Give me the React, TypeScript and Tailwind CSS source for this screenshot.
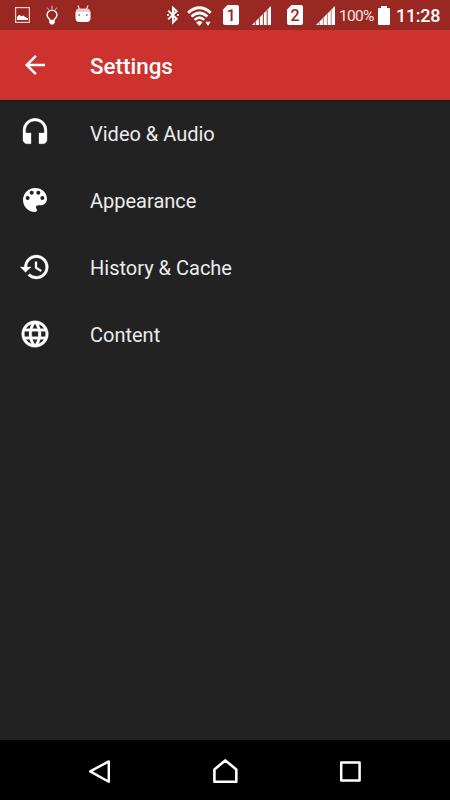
import type { ReactNode } from "react";
import type { IconType } from "react-icons";
import { MdArrowBack, MdHeadset, MdHistory, MdLanguage } from "react-icons/md";

interface SettingsItem {
  label: string;
  icon: IconType | typeof PaletteIcon;
}

const items: SettingsItem[] = [
  { label: "Video & Audio", icon: MdHeadset },
  { label: "Appearance", icon: PaletteIcon },
  { label: "History & Cache", icon: MdHistory },
  { label: "Content", icon: MdLanguage },
];

function PaletteIcon({ className }: { className?: string }) {
  return (
    <svg className={className} viewBox="0 0 24 24" fill="currentColor">
      <path d="M12 3a9 9 0 0 0 0 18c.83 0 1.5-.67 1.5-1.5 0-.39-.15-.74-.39-1.01-.23-.26-.38-.61-.38-.99 0-.83.67-1.5 1.5-1.5H16c2.76 0 5-2.24 5-5 0-4.42-4.03-8-9-8z" />
      <g className="fill-[#222222]">
        <circle cx="6.5" cy="10.5" r="1.5" />
        <circle cx="9.5" cy="6.5" r="1.5" />
        <circle cx="14.5" cy="6.5" r="1.5" />
        <circle cx="17.5" cy="10.5" r="1.5" />
      </g>
    </svg>
  );
}

function PictureIcon() {
  return (
    <svg className="ml-[15px] h-4 w-[15px] shrink-0" viewBox="0 0 15 16" fill="none">
      <rect x="0.6" y="0.6" width="13.8" height="14.8" stroke="#f0d2d0" strokeWidth="1.2" />
      <path d="M2 13V10l2.3-2.3 2 1.6 2.2-.8L10 10l3 1.2V13z" fill="#fff" />
    </svg>
  );
}

function BulbIcon() {
  return (
    <svg className="ml-4 h-5 w-3 shrink-0" viewBox="0 0 12 20" fill="none">
      <path d="M1.2 2.6l1.5 2M6 .8v3M10.8 2.6l-1.5 2" stroke="#f0d2d0" />
      <path d="M4.1 15.4C3.8 13.6 1.1 12.8 1.1 10a4.9 4.9 0 0 1 9.8 0c0 2.8-2.7 3.6-3 5.4z" stroke="#fff" strokeWidth="1.4" />
      <path d="M3.2 15h5.6v2.2L7.4 19.4H4.6l-1.4-2.2z" fill="#fff" />
    </svg>
  );
}

function CatIcon() {
  return (
    <svg className="mb-[3px] ml-[17px] h-[18px] w-4 shrink-0" viewBox="0 0 16 18">
      <path d="M3 .5l1.6 4M13 .5l-1.6 4" stroke="#f3dcda" strokeWidth="1.2" />
      <path d="M.6 7.2Q.8 3.4 4 3.4h8q3.2 0 3.4 3.8z" fill="#edcbc9" />
      <path d="M.5 7h15v6q0 4-4 4h-7q-4 0-4-4z" fill="#fff" />
      <circle cx="4.2" cy="10" r="1" fill="#bd6763" />
      <circle cx="11.8" cy="10" r="1" fill="#bd6763" />
    </svg>
  );
}

function BluetoothIcon() {
  return (
    <svg className="ml-auto h-5 w-3 shrink-0" viewBox="0 0 12 20" fill="none">
      <path d="M1.2 5.6l8.4 8.2L6 17.4V2.8l3.6 3.5-8.4 8.1" stroke="#fff" strokeWidth="2" />
      <path d="M0 9h2v2H0zM10 9h2v2h-2z" fill="#f3dcda" />
    </svg>
  );
}

function WifiIcon() {
  return (
    <svg className="ml-2 h-[21px] w-[25px] shrink-0" viewBox="0 0 25 21" fill="none">
      <path d="M1.1 7.8Q12.4 -2.2 23.7 7.8" stroke="#fff" strokeWidth="3" />
      <path d="M4.4 11.5Q12.4 4.5 20.4 11.5" stroke="#fff" strokeWidth="2.8" />
      <path d="M7.6 14.9Q12.4 10.4 17.2 14.9" stroke="#fff" strokeWidth="2.6" />
      <path d="M9.2 17.4Q12.4 14.6 15.4 17.4L12.4 21z" fill="#fff" />
      <path d="M18.4 16.7h5.2L21 21z" fill="#fff" />
    </svg>
  );
}

function SignalIcon({ gapColor }: { gapColor: string }) {
  return (
    <svg className="h-[19px] w-[19px] shrink-0" viewBox="0 0 19 19">
      <path d="M0 19L19 0v19z" fill="#fff" />
      <path d="M3 16l1-1v4H3zM6.8 12.2l1.2-1.2v8H6.8zM10.8 8.2L12 7v12h-1.2zM14.6 4.4l1.2-1.2V19h-1.2z" fill={gapColor} />
    </svg>
  );
}

function SimCard({ children }: { children: ReactNode }) {
  return (
    <span className="relative flex h-5 w-4 shrink-0 items-center justify-center">
      <svg className="absolute inset-0 h-5 w-4" viewBox="0 0 16 20">
        <path d="M4.5 0H14q2 0 2 2v16q0 2-2 2H2q-2 0-2-2V4.5z" fill="#fff" />
      </svg>
      <span className="relative pt-px text-[16px] leading-5 font-medium text-[#992722]">{children}</span>
    </span>
  );
}

function StatusBar() {
  return (
    <div className="flex h-[30px] items-center bg-[#992722] pr-[9px] text-white">
      <PictureIcon />
      <BulbIcon />
      <CatIcon />
      <BluetoothIcon />
      <WifiIcon />
      <span className="ml-[11px] flex">
        <SimCard>1</SimCard>
      </span>
      <span className="ml-[13px] flex">
        <SignalIcon gapColor="#aa4f4b" />
      </span>
      <span className="ml-4 flex">
        <SimCard>2</SimCard>
      </span>
      <span className="ml-[13px] flex">
        <SignalIcon gapColor="#c4908e" />
      </span>
      <span className="ml-1 w-[36px] pt-1 text-[15.5px] leading-none tracking-[-0.7px] whitespace-nowrap text-[#f7e6e5]">100%</span>
      <svg className="ml-[3px] h-[19px] w-3 shrink-0" viewBox="0 0 12 19">
        <path d="M3 2V0h6v2h2q1 0 1 1v15q0 1-1 1H1q-1 0-1-1V3q0-1 1-1z" fill="#fff" />
      </svg>
      <span className="ml-1.5 w-[45px] pt-0.5 text-[18px] leading-none font-medium tracking-[-0.3px] whitespace-nowrap">11:28</span>
    </div>
  );
}

function Toolbar() {
  return (
    <header className="flex h-[70px] items-center bg-[#cd322e] pl-5 text-white">
      <MdArrowBack className="h-[30px] w-[30px] shrink-0" />
      <h1 className="ml-10 pt-0.5 text-[22.4px] leading-7 font-medium">Settings</h1>
    </header>
  );
}

function NavigationBar() {
  return (
    <nav className="flex h-[60px] items-center bg-black">
      <svg className="ml-[88px] h-7 w-6" viewBox="0 0 24 28" fill="none" stroke="#fff" strokeWidth="2.4" strokeLinejoin="round">
        <path d="M20.8 5.4v20.4L2.2 15.4z" />
      </svg>
      <svg className="ml-[100px] h-7 w-[26px]" viewBox="0 0 26 28" fill="none" stroke="#fff" strokeWidth="2.6" strokeLinejoin="round">
        <path d="M2.4 13.4L13.3 4.4l11 9v12.3H2.4z" />
      </svg>
      <svg className="ml-[101px] h-7 w-[22px]" viewBox="0 0 22 28" fill="none" stroke="#fff" strokeWidth="2.5" strokeLinejoin="round">
        <path d="M2.2 6.4h18.4v18.1H2.2z" />
      </svg>
    </nav>
  );
}

export default function App() {
  return (
    <div className="flex h-[800px] w-[450px] flex-col overflow-hidden bg-[#222222] font-[Roboto,sans-serif]">
      <StatusBar />
      <Toolbar />
      <main className="flex-1 border-t border-[#061f20]">
        <ul className="-mt-px">
          {items.map(({ label, icon: Icon }) => (
            <li key={label} className="flex h-[67px] items-center pl-[19px] text-[#ececec]">
              <Icon className="mb-px h-8 w-8 shrink-0 text-white [&>path:last-child]:stroke-[0.25]" />
              <span className="ml-[39px] text-[20px] leading-6">{label}</span>
            </li>
          ))}
        </ul>
      </main>
      <NavigationBar />
    </div>
  );
}
